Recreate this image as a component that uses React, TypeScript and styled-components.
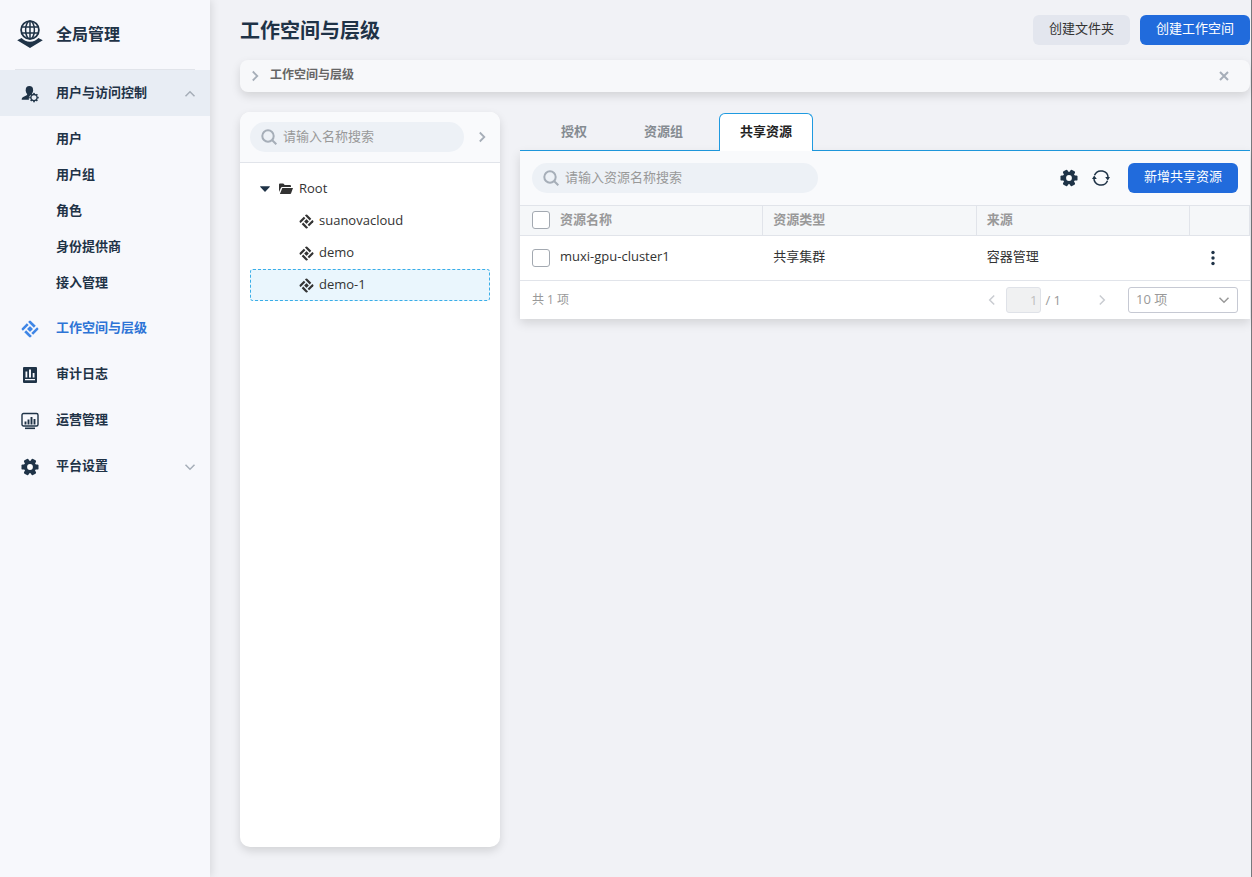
import React from 'react';
import styled, { createGlobalStyle, css } from 'styled-components';

const ink = '#1f3347';
const blue = '#216bdc';
const line = '#e1e4ea';
const muted = '#999999';
const icon = '#a6aeb8';

const GlobalStyle = createGlobalStyle`
  *, *::before, *::after { box-sizing: border-box; }
  body {
    margin: 0;
    background: #f1f2f6;
    color: #333333;
    font: 13px/20px "Open Sans", "Noto Sans CJK SC", sans-serif;
  }
  button, input, select { font: inherit; color: inherit; }
  button { border: 0; padding: 0; background: none; cursor: pointer; }
  ul, ol { list-style: none; margin: 0; padding: 0; }
  a { color: inherit; text-decoration: none; }
  svg { display: block; flex: none; }
`;

/* Icons */

type IconProps = { size?: number };

const GlobeIcon = () => (
  <svg width="26" height="28" viewBox="0 0 26 28" fill="none" stroke="currentColor" aria-hidden="true">
    <circle cx="13" cy="10" r="8.9" strokeWidth="1.8" />
    <ellipse cx="13" cy="10" rx="4.4" ry="8.9" strokeWidth="1.5" />
    <path d="M13 1v18M4.800 7h16.400M4.800 13h16.400" strokeWidth="1.500" />
    <path d="M0.2 20.300 4.600 17.900c2 2.300 5 3.800 8.400 3.800s6.400-1.500 8.400-3.800l4.400 2.400L13 27.900z" fill="currentColor" stroke="none" />
  </svg>
);

const UserGearIcon = () => (
  <svg width="18" height="18" viewBox="0 0 18 18" fill="currentColor" aria-hidden="true">
    <ellipse cx="8.400" cy="5.200" rx="3.700" ry="4.200" />
    <path d="M6.200 8h4.600v1.200a5.400 5.400 0 0 0-2.900 5.600H.7c0-1.700.4-2.400 1.500-2.900l3-1.300c.7-.3 1-.7 1-1.300z" />
    <g transform="translate(13 12.600)">
      <circle r="3.100" fill="none" stroke="currentColor" strokeWidth="1.300" />
      {[0, 45, 90, 135, 180, 225, 270, 315].map((a) => (
        <rect key={a} x="-.8" y="-4.700" width="1.600" height="1.500" transform={`rotate(${a})`} />
      ))}
    </g>
  </svg>
);

const WorkspaceIcon = ({ size = 18 }: IconProps) => (
  <svg width={size} height={size} viewBox="-9 -9 18 18" fill="currentColor" aria-hidden="true">
    <g transform="rotate(45)">
      {[0, 90, 180, 270].map((a) => (
        <path key={a} d="M-6.300-5.100a1.200 1.200 0 0 1 1.200-1.200H1.800v2.600H-6.300z" transform={`rotate(${a})`} />
      ))}
      <rect x="-2.100" y="-2.100" width="4.200" height="4.200" rx=".6" />
    </g>
  </svg>
);

const AuditIcon = () => (
  <svg width="18" height="18" viewBox="0 0 18 18" aria-hidden="true">
    <path
      fill="currentColor"
      fillRule="evenodd"
      d="M2 2a1 1 0 0 1 1-1h12a1 1 0 0 1 1 1v14a1 1 0 0 1-1 1H3a1 1 0 0 1-1-1zM4.500 5.500v6h1.800v-6zM8 3.500v8h2v-8zM11.700 7v4.500h1.800V7zM4 13v1.300h10V13z"
    />
  </svg>
);

const MonitorIcon = () => (
  <svg width="18" height="18" viewBox="0 0 18 18" fill="none" stroke="currentColor" aria-hidden="true">
    <rect x="1" y="1.500" width="16" height="12.500" rx="1.500" strokeWidth="1.400" />
    <path d="M4.500 12.500V9.500M7.500 12.500V7.500M10.500 12.500V5M13.500 12.500V7" strokeWidth="1.900" />
    <path d="M4 16.300h10" strokeWidth="1.600" />
  </svg>
);

const GearIcon = ({ size = 18 }: IconProps) => (
  <svg width={size} height={size} viewBox="-9 -9 18 18" aria-hidden="true">
    {[30, 90, 150].map((a) => (
      <rect key={a} x="-2.600" y="-8.500" width="5.200" height="17" rx="1.200" fill="currentColor" transform={`rotate(${a})`} />
    ))}
    <circle r="6.200" fill="currentColor" />
    <circle r="2.900" fill="#ffffff" />
  </svg>
);

const RefreshIcon = () => (
  <svg width="18" height="18" viewBox="0 0 18 18" fill="none" stroke="currentColor" strokeWidth="1.500" aria-hidden="true">
    <path d="M2.500 6.200A7.100 7.100 0 0 1 16.100 9M15.500 11.800A7.100 7.100 0 0 1 1.900 9" />
    <path d="M13.200 8H18l-2.200 3.400zM0 10h4.800l-2.600-3.400z" fill="currentColor" stroke="none" />
  </svg>
);

const SearchIcon = () => (
  <svg width="16" height="16" viewBox="0 0 16 16" fill="none" stroke="currentColor" strokeWidth="2" aria-hidden="true">
    <circle cx="7" cy="7" r="5.700" />
    <path d="M11 11l4.300 4.300" />
  </svg>
);

const FolderIcon = () => (
  <svg width="14" height="12" viewBox="0 0 14 12" fill="currentColor" aria-hidden="true">
    <path d="M0 1.500C0 1 .4.600.9.600h3.400l1.400 1.500h5.400c.5 0 .9.400.9.900v1H3.100c-.5 0-.9.300-1.100.7L0 9z" />
    <path d="M3.300 4.900H14l-2 5.700c-.1.300-.4.500-.8.500H.9z" />
  </svg>
);

const CaretIcon = () => (
  <svg width="10" height="6" viewBox="0 0 10 6" aria-hidden="true">
    <path d="M.6.300h8.800c.4 0 .6.400.3.700L5.500 5.500a.7.700 0 0 1-1 0L.3 1C0 .7.200.300.6.300z" fill={ink} />
  </svg>
);

const CloseIcon = () => (
  <svg width="10" height="10" viewBox="0 0 10 10" stroke="currentColor" strokeWidth="2" aria-hidden="true">
    <path d="M1 1l8 8M9 1L1 9" />
  </svg>
);

const MoreIcon = () => (
  <svg width="4" height="16" viewBox="0 0 4 16" fill="currentColor" aria-hidden="true">
    <circle cx="2" cy="2.500" r="1.700" />
    <circle cx="2" cy="8" r="1.700" />
    <circle cx="2" cy="13.500" r="1.700" />
  </svg>
);

const turns = { right: 0, down: 90, left: 180, up: 270 };

const Chevron = ({ to, weight = 1.5 }: { to: keyof typeof turns; weight?: number }) => (
  <svg width="12" height="12" viewBox="0 0 12 12" fill="none" stroke="currentColor" strokeWidth={weight} aria-hidden="true">
    <path d="M3.800 1.500L8.300 6l-4.500 4.500" transform={`rotate(${turns[to]} 6 6)`} />
  </svg>
);

/* Frame */

const Page = styled.div`
  display: flex;
  min-height: 100vh;
  border-right: 1px solid #77797d;
`;

const Sidebar = styled.nav`
  flex: none;
  width: 210px;
  background: #f7f8fc;
  color: ${ink};
  box-shadow: 2px 0 8px rgba(0, 0, 0, 0.1);
`;

const Brand = styled.div`
  display: flex;
  align-items: center;
  gap: 13px;
  height: 70px;
  margin: 0 15px;
  padding: 0 0 2px 2px;
  border-bottom: 1px solid ${line};
  font-size: 16px;
  font-weight: 600;
`;

const navRow = css`
  display: flex;
  align-items: center;
  width: 100%;
  height: 46px;
  padding: 2px 14px 0 21px;
  font-weight: 600;
  text-align: left;
`;

const NavGroup = styled.button<{ $open?: boolean }>`
  ${navRow}
  background: ${(p) => (p.$open ? '#e8edf4' : 'transparent')};
`;

const NavLink = styled.a<{ $active?: boolean }>`
  ${navRow}
  color: ${(p) => (p.$active ? '#2d74d6' : ink)};
  & > svg { color: ${(p) => (p.$active ? '#3f86e6' : ink)}; }
`;

const NavLabel = styled.span`
  flex: 1;
  margin-left: 17px;
  padding-bottom: 4px;
`;

const NavArrow = styled.span`
  color: ${icon};
`;

const SubNav = styled.ul`
  padding: 4px 0 5px;
`;

const SubLink = styled.a`
  display: block;
  padding: 8px 14px 8px 56px;
  font-weight: 600;
`;

const Main = styled.main`
  flex: 1;
  min-width: 0;
  display: flex;
  flex-direction: column;
  padding: 15px 1px 30px 30px;
`;

const Header = styled.header`
  display: flex;
  align-items: center;
  justify-content: space-between;
  margin-bottom: 15px;
`;

const Title = styled.h1`
  margin: 0;
  padding-top: 2px;
  color: ${ink};
  font-size: 20px;
  line-height: 28px;
  font-weight: 700;
`;

const Actions = styled.div`
  display: flex;
  align-items: center;
  gap: 10px;
`;

const Button = styled.button<{ $primary?: boolean }>`
  height: 30px;
  padding: 0 16px 4px;
  border-radius: 6px;
  background: ${(p) => (p.$primary ? blue : '#e3e6ee')};
  color: ${(p) => (p.$primary ? '#ffffff' : '#333333')};
`;

const IconButton = styled.button<{ $color?: string }>`
  display: grid;
  place-items: center;
  color: ${(p) => p.$color ?? icon};
`;

const shadow = '0 4px 10px rgba(0, 0, 0, 0.13)';

const Notice = styled.section`
  display: flex;
  align-items: center;
  gap: 9px;
  height: 32px;
  margin-bottom: 20px;
  padding: 0 21px 0 9px;
  border-radius: 8px;
  background: #f7f8fa;
  box-shadow: ${shadow};
`;

const NoticeText = styled.span`
  flex: 1;
  padding-bottom: 2px;
  color: #666666;
  font-size: 12px;
  font-weight: 600;
`;

const Columns = styled.div`
  flex: 1;
  display: flex;
  gap: 20px;
`;

/* Search field */

const SearchBox = styled.label<{ $wide?: boolean }>`
  flex: ${(p) => (p.$wide ? '0 1 286px' : '1')};
  min-width: 0;
  display: flex;
  align-items: center;
  gap: 6px;
  height: 30px;
  padding: 0 11px;
  border-radius: 15px;
  background: #edf1f6;
  color: ${icon};
`;

const SearchInput = styled.input`
  flex: 1;
  min-width: 0;
  padding: 0 0 3px;
  border: 0;
  outline: 0;
  background: none;
  color: #333333;
  &::placeholder { color: ${muted}; opacity: 1; }
`;

const Search = ({ hint, wide }: { hint: string; wide?: boolean }) => (
  <SearchBox $wide={wide}>
    <SearchIcon />
    <SearchInput type="text" placeholder={hint} aria-label={hint} />
  </SearchBox>
);

/* Tree panel */

const TreePanel = styled.section`
  flex: none;
  width: 260px;
  border-radius: 10px;
  background: #ffffff;
  box-shadow: ${shadow};
  overflow: hidden;
`;

const TreeHead = styled.div`
  display: flex;
  align-items: center;
  gap: 12px;
  padding: 10px 12px 10px 10px;
  border-bottom: 1px solid ${line};
  background: #f9fafc;
`;

const Tree = styled.ul`
  padding: 10px;
`;

const TreeRow = styled.button<{ $child?: boolean; $selected?: boolean }>`
  display: flex;
  align-items: center;
  gap: ${(p) => (p.$child ? '5px' : '6px')};
  width: 100%;
  height: 32px;
  padding: 0 0 0 ${(p) => (p.$child ? '48px' : '9px')};
  border: 1px dashed ${(p) => (p.$selected ? '#3aaee8' : 'transparent')};
  border-radius: 3px;
  background: ${(p) => (p.$selected ? '#eaf6fd' : 'transparent')};
`;

const TreeCaret = styled.span`
  margin-right: 3px;
`;

const TreeLabel = styled.span`
  padding-bottom: 2px;
`;

/* Resource panel */

const Resources = styled.section`
  flex: 1;
  min-width: 0;
  padding-top: 1px;
`;

const Tabs = styled.div`
  display: flex;
  gap: 15px;
  padding: 0 20px;
  border-bottom: 1px solid #1f9ae0;
`;

const Tab = styled.button<{ $active?: boolean }>`
  height: 38px;
  margin-bottom: -1px;
  padding: 0 20px 4px;
  border: 1px solid ${(p) => (p.$active ? '#1f9ae0' : 'transparent')};
  border-bottom: 0;
  border-radius: 6px 6px 0 0;
  background: ${(p) => (p.$active ? '#ffffff' : 'transparent')};
  color: ${(p) => (p.$active ? '#222222' : '#858b91')};
  font-weight: 600;
`;

const Card = styled.div`
  background: #ffffff;
  box-shadow: ${shadow};
`;

const Toolbar = styled.div`
  display: flex;
  align-items: center;
  justify-content: space-between;
  padding: 12px;
  background: #f9fafc;
`;

const Tools = styled.div`
  display: flex;
  align-items: center;
  gap: 14px;
  & > :last-child { margin-left: 4px; }
`;

const Table = styled.table`
  width: 100%;
  table-layout: fixed;
  border-collapse: separate;
  border-spacing: 0;
  text-align: left;
`;

const Th = styled.th<{ $width?: number; $plain?: boolean }>`
  width: ${(p) => (p.$width ? `${p.$width}px` : 'auto')};
  height: 31px;
  padding: 0 0 4px 10px;
  border: 0 solid ${line};
  border-width: 1px ${(p) => (p.$plain ? '0' : '1px')} 1px 0;
  background: #f5f7f9;
  color: ${muted};
  font-weight: 600;
`;

const Td = styled.td`
  height: 45px;
  padding: 0 0 4px 10px;
  border-bottom: 1px solid ${line};
  &:first-child { padding-bottom: 2px; }
`;

const Check = styled.input`
  appearance: none;
  display: block;
  width: 18px;
  height: 18px;
  margin: 2px 0 0 2px;
  border: 1px solid #a3a9b1;
  border-radius: 3px;
  background: #ffffff;
`;

const RowMenu = styled(IconButton)`
  width: 16px;
  height: 20px;
  margin: 3px 0 0 5px;
`;

const Footer = styled.div`
  display: flex;
  align-items: center;
  justify-content: space-between;
  height: 38px;
  padding: 0 12px;
  color: ${muted};
`;

const Total = styled.span`
  font-size: 12px;
`;

const Pager = styled.div`
  display: flex;
  align-items: center;
`;

const PageInput = styled.input`
  width: 35px;
  height: 26px;
  margin: 0 4px 0 8px;
  padding: 0 3px 1px 0;
  border: 1px solid #dfe2e8;
  border-radius: 3px;
  background: #f0f1f2;
  color: #bfbfbf;
  text-align: right;
`;

const PageCount = styled.span`
  padding-bottom: 1px;
`;

const NextButton = styled(IconButton)`
  margin: 0 20px 0 35px;
`;

const SizeBox = styled.div`
  display: grid;
  align-items: center;
  width: 110px;
  color: ${muted};
  & > * { grid-area: 1 / 1; }
  & > svg { justify-self: end; margin-right: 8px; pointer-events: none; }
`;

const SizeSelect = styled.select`
  appearance: none;
  width: 100%;
  height: 26px;
  padding: 0 24px 2px 7px;
  border: 1px solid #c6c9d3;
  border-radius: 3px;
  background: #ffffff;
`;

const subItems = ['用户', '用户组', '角色', '身份提供商', '接入管理'];
const workspaces = ['suanovacloud', 'demo', 'demo-1'];
const tabs = ['授权', '资源组', '共享资源'];
const links = [
  { label: '工作空间与层级', glyph: <WorkspaceIcon />, active: true },
  { label: '审计日志', glyph: <AuditIcon /> },
  { label: '运营管理', glyph: <MonitorIcon /> },
];

export default function App() {
  return (
    <>
      <GlobalStyle />
      <Page>
        <Sidebar>
          <Brand>
            <GlobeIcon />
            全局管理
          </Brand>
          <NavGroup $open type="button" aria-expanded="true">
            <UserGearIcon />
            <NavLabel>用户与访问控制</NavLabel>
            <NavArrow><Chevron to="up" /></NavArrow>
          </NavGroup>
          <SubNav>
            {subItems.map((label) => (
              <li key={label}><SubLink href="#">{label}</SubLink></li>
            ))}
          </SubNav>
          {links.map((item) => (
            <NavLink key={item.label} href="#" $active={item.active}>
              {item.glyph}
              <NavLabel>{item.label}</NavLabel>
            </NavLink>
          ))}
          <NavGroup type="button" aria-expanded="false">
            <GearIcon />
            <NavLabel>平台设置</NavLabel>
            <NavArrow><Chevron to="down" /></NavArrow>
          </NavGroup>
        </Sidebar>

        <Main>
          <Header>
            <Title>工作空间与层级</Title>
            <Actions>
              <Button type="button">创建文件夹</Button>
              <Button type="button" $primary>创建工作空间</Button>
            </Actions>
          </Header>

          <Notice>
            <IconButton type="button" aria-label="展开"><Chevron to="right" weight={1.8} /></IconButton>
            <NoticeText>工作空间与层级</NoticeText>
            <IconButton type="button" aria-label="关闭"><CloseIcon /></IconButton>
          </Notice>

          <Columns>
            <TreePanel>
              <TreeHead>
                <Search hint="请输入名称搜索" />
                <IconButton type="button" aria-label="展开面板"><Chevron to="right" weight={1.8} /></IconButton>
              </TreeHead>
              <Tree>
                <li>
                  <TreeRow type="button">
                    <TreeCaret><CaretIcon /></TreeCaret>
                    <FolderIcon />
                    <TreeLabel>Root</TreeLabel>
                  </TreeRow>
                  <ul>
                    {workspaces.map((name) => (
                      <li key={name}>
                        <TreeRow type="button" $child $selected={name === 'demo-1'}>
                          <WorkspaceIcon size={15} />
                          <TreeLabel>{name}</TreeLabel>
                        </TreeRow>
                      </li>
                    ))}
                  </ul>
                </li>
              </Tree>
            </TreePanel>

            <Resources>
              <Tabs role="tablist">
                {tabs.map((name) => (
                  <Tab key={name} type="button" role="tab" aria-selected={name === '共享资源'} $active={name === '共享资源'}>
                    {name}
                  </Tab>
                ))}
              </Tabs>
              <Card>
                <Toolbar>
                  <Search hint="请输入资源名称搜索" wide />
                  <Tools>
                    <IconButton type="button" aria-label="设置" $color={ink}><GearIcon /></IconButton>
                    <IconButton type="button" aria-label="刷新" $color={ink}><RefreshIcon /></IconButton>
                    <Button type="button" $primary>新增共享资源</Button>
                  </Tools>
                </Toolbar>
                <Table>
                  <thead>
                    <tr>
                      <Th $width={30} $plain><Check type="checkbox" aria-label="全选" /></Th>
                      <Th>资源名称</Th>
                      <Th>资源类型</Th>
                      <Th>来源</Th>
                      <Th $width={60} />
                    </tr>
                  </thead>
                  <tbody>
                    <tr>
                      <Td><Check type="checkbox" aria-label="选择 muxi-gpu-cluster1" /></Td>
                      <Td>muxi-gpu-cluster1</Td>
                      <Td>共享集群</Td>
                      <Td>容器管理</Td>
                      <Td><RowMenu type="button" aria-label="更多" $color={ink}><MoreIcon /></RowMenu></Td>
                    </tr>
                  </tbody>
                </Table>
                <Footer>
                  <Total>共 1 项</Total>
                  <Pager>
                    <IconButton type="button" aria-label="上一页" $color="#c9ccd1"><Chevron to="left" /></IconButton>
                    <PageInput type="text" defaultValue="1" disabled aria-label="页码" />
                    <PageCount>/ 1</PageCount>
                    <NextButton type="button" aria-label="下一页" $color="#c9ccd1"><Chevron to="right" /></NextButton>
                    <SizeBox>
                      <SizeSelect aria-label="每页数量" defaultValue="10">
                        <option value="10">10 项</option>
                        <option value="20">20 项</option>
                      </SizeSelect>
                      <Chevron to="down" />
                    </SizeBox>
                  </Pager>
                </Footer>
              </Card>
            </Resources>
          </Columns>
        </Main>
      </Page>
    </>
  );
}
